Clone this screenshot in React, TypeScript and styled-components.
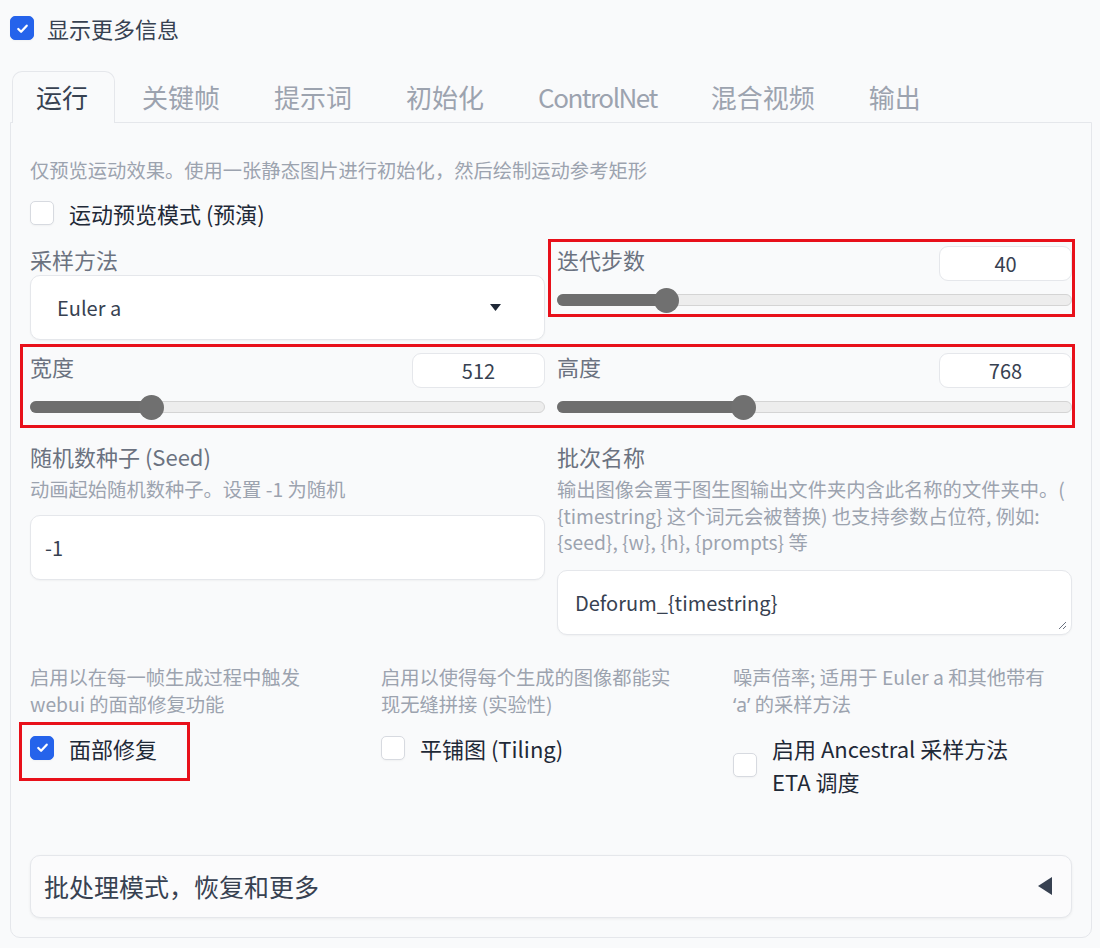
import styled, { createGlobalStyle } from 'styled-components'

const GlobalStyle = createGlobalStyle`
  body {
    margin: 0;
    background: #f9fafb;
    font-family: "Noto Sans CJK SC", "Noto Sans", sans-serif;
    color: #374151;
  }
  * { box-sizing: border-box; }
`

const Page = styled.div`
  width: 1100px;
  height: 948px;
  padding: 12px 8px 0 10px;
`

const TopRow = styled.label`
  display: flex;
  align-items: center;
  gap: 13px;
  height: 32px;
  font-size: 22px;
  color: #374151;
`

const Box = styled.span<{ $checked?: boolean }>`
  width: 24px;
  height: 24px;
  flex: none;
  border-radius: 5px;
  display: flex;
  align-items: center;
  justify-content: center;
  background: ${(p) => (p.$checked ? '#2563eb' : '#ffffff')};
  border: 1px solid ${(p) => (p.$checked ? '#2563eb' : '#d7dae0')};
  box-shadow: 0 1px 2px rgba(0, 0, 0, 0.04);
`

const TabBar = styled.div`
  display: flex;
  align-items: flex-end;
  margin-top: 26px;
  padding-left: 2px;
  height: 52px;
`

const Tab = styled.div<{ $active?: boolean; $tight?: boolean }>`
  height: 52px;
  line-height: 50px;
  padding: 0 26px 0 ${(p) => (p.$active ? '23px' : '26px')};
  font-size: 26px;
  letter-spacing: ${(p) => (p.$tight ? '-1.5px' : '0')};
  color: ${(p) => (p.$active ? '#374151' : '#9ca3af')};
  background: ${(p) => (p.$active ? '#f9fafb' : 'transparent')};
  border: 1px solid ${(p) => (p.$active ? '#e5e7eb' : 'transparent')};
  border-bottom: none;
  border-radius: 10px 10px 0 0;
  margin-bottom: -1px;
  position: relative;
  z-index: 1;
`

const Panel = styled.div`
  width: 1082px;
  border: 1px solid #e5e7eb;
  border-radius: 0 0 10px 10px;
  padding: 34px 19px 19px;
  background: #f9fafb;
`

const Desc = styled.div<{ $lh?: number }>`
  font-size: 19.3px;
  line-height: ${(p) => p.$lh ?? 26}px;
  color: #9ca3af;
`

const Latin = styled.span`
  font-family: "Noto Sans", sans-serif;
`

const CheckRow = styled.label<{ $lh?: number }>`
  display: inline-flex;
  align-items: center;
  gap: 15px;
  font-size: 22px;
  line-height: ${(p) => p.$lh ?? 30}px;
  color: #1f2937;
`

const Grid2 = styled.div<{ $mt: number }>`
  display: grid;
  grid-template-columns: 515px 515px;
  column-gap: 12px;
  align-items: start;
  margin-top: ${(p) => p.$mt}px;
`

const Grid3 = styled.div`
  display: grid;
  grid-template-columns: 339px 340px 339px;
  column-gap: 12px;
  margin-top: 29px;
`

const Field = styled.div`
  display: flex;
  flex-direction: column;
`

const Label = styled.div`
  font-size: 22px;
  line-height: 30px;
  color: #6b7280;
`

const Select = styled.div`
  margin-top: 1px;
  height: 65px;
  background: #ffffff;
  border: 1px solid #e5e7eb;
  border-radius: 10px;
  box-shadow: 0 1px 2px rgba(0, 0, 0, 0.04);
  display: flex;
  align-items: center;
  justify-content: space-between;
  padding: 0 43px 0 26px;
  font-size: 20px;
  color: #374151;
`

const TextInput = styled.div<{ $mt: number; $pl: number }>`
  margin-top: ${(p) => p.$mt}px;
  height: 65px;
  background: #ffffff;
  border: 1px solid #e5e7eb;
  border-radius: 10px;
  box-shadow: 0 1px 2px rgba(0, 0, 0, 0.04);
  display: flex;
  align-items: center;
  padding-left: ${(p) => p.$pl}px;
  font-size: 20px;
  color: #374151;
  position: relative;
`

const Resizer = styled.svg`
  position: absolute;
  right: 4px;
  bottom: 4px;
`

const SliderHead = styled.div`
  display: flex;
  justify-content: space-between;
  align-items: flex-start;
`

const NumberBox = styled.div`
  margin-top: 2px;
  width: 133px;
  height: 35px;
  background: #ffffff;
  border: 1px solid #e5e7eb;
  border-radius: 9px;
  font-size: 20px;
  line-height: 33px;
  text-align: center;
  color: #374151;
`

const SliderWrap = styled.div`
  margin-top: 7px;
  height: 24px;
  display: flex;
  align-items: center;
`

const Track = styled.div`
  position: relative;
  width: 100%;
  height: 12px;
  border-radius: 6px;
  background: #ededed;
  border: 1px solid #d4d4d4;
`

const Fill = styled.div<{ $pct: number }>`
  position: absolute;
  left: -1px;
  top: -1px;
  bottom: -1px;
  width: ${(p) => p.$pct}%;
  background: #6e6e6e;
  border-radius: 6px 0 0 6px;
`

const Thumb = styled.div<{ $pct: number }>`
  position: absolute;
  top: 50%;
  left: ${(p) => p.$pct}%;
  width: 25px;
  height: 25px;
  margin: -12.5px 0 0 -12.5px;
  border-radius: 50%;
  background: #707070;
`

const Highlight = styled.div<{ $t: number; $r: number; $b: number; $l: number; $inline?: boolean }>`
  position: relative;
  display: ${(p) => (p.$inline ? 'inline-block' : 'block')};
  &::after {
    content: '';
    position: absolute;
    top: ${(p) => -p.$t}px;
    right: ${(p) => -p.$r}px;
    bottom: ${(p) => -p.$b}px;
    left: ${(p) => -p.$l}px;
    border: 3px solid #e8101a;
    pointer-events: none;
  }
`

const OptCol = styled.div`
  display: flex;
  flex-direction: column;
`

const OptCheck = styled.div`
  margin-top: 14px;
`

const Accordion = styled.div`
  margin-top: 57px;
  height: 63px;
  background: #fbfbfc;
  border: 1px solid #e5e7eb;
  border-radius: 10px;
  box-shadow: 0 1px 3px rgba(0, 0, 0, 0.06);
  display: flex;
  align-items: center;
  justify-content: space-between;
  padding: 0 19px 0 13px;
  font-size: 25px;
  color: #374151;
`

const Check = () => (
  <svg width="15" height="15" viewBox="0 0 16 16">
    <path d="M3.5 8.5l3 3 6-6.5" fill="none" stroke="#fff" strokeWidth="2.4" strokeLinecap="round" strokeLinejoin="round" />
  </svg>
)

const Checkbox = ({ checked }: { checked?: boolean }) => (
  <Box $checked={checked}>{checked && <Check />}</Box>
)

const Slider = ({ label, value, pct }: { label: string; value: string; pct: number }) => (
  <Field>
    <SliderHead>
      <Label>{label}</Label>
      <NumberBox>{value}</NumberBox>
    </SliderHead>
    <SliderWrap>
      <Track>
        <Fill $pct={pct} />
        <Thumb $pct={pct} />
      </Track>
    </SliderWrap>
  </Field>
)

const tabs = ['运行', '关键帧', '提示词', '初始化', 'ControlNet', '混合视频', '输出']

export default function App() {
  return (
    <>
      <GlobalStyle />
      <Page>
        <TopRow>
          <Checkbox checked />
          显示更多信息
        </TopRow>
        <TabBar>
          {tabs.map((t, i) => (
            <Tab key={t} $active={i === 0} $tight={t === 'ControlNet'}>{t}</Tab>
          ))}
        </TabBar>
        <Panel>
          <Desc>仅预览运动效果。使用一张静态图片进行初始化，然后绘制运动参考矩形</Desc>
          <div style={{ marginTop: 15 }}>
            <CheckRow>
              <Checkbox />
              运动预览模式 (预演)
            </CheckRow>
          </div>

          <Grid2 $mt={14}>
            <Field>
              <Label>采样方法</Label>
              <Select>
                Euler a
                <svg width="11" height="7" viewBox="0 0 11 7">
                  <path d="M0 0h11L5.5 7z" fill="#1f2937" />
                </svg>
              </Select>
            </Field>
            <Highlight $t={5} $r={3} $b={5} $l={9}>
              <Slider label="迭代步数" value="40" pct={21.2} />
            </Highlight>
          </Grid2>

          <div style={{ marginTop: 11 }}>
            <Highlight $t={7} $r={3} $b={9} $l={10}>
              <Grid2 $mt={0}>
                <Slider label="宽度" value="512" pct={23.5} />
                <Slider label="高度" value="768" pct={36.1} />
              </Grid2>
            </Highlight>
          </div>

          <Grid2 $mt={22}>
            <Field>
              <Label>随机数种子 (Seed)</Label>
              <Desc style={{ marginTop: 5 }}>动画起始随机数种子。设置 -1 为随机</Desc>
              <TextInput $mt={13} $pl={14}>-1</TextInput>
            </Field>
            <Field>
              <Label>批次名称</Label>
              <Desc $lh={26.5} style={{ marginTop: 5 }}>
                输出图像会置于图生图输出文件夹内含此名称的文件夹中。(
                <br />
                {'{timestring}'} 这个词元会被替换) 也支持参数占位符, 例如:
                <br />
                {'{seed}, {w}, {h}, {prompts}'} 等
              </Desc>
              <TextInput $mt={14} $pl={17}>
                Deforum_{'{timestring}'}
                <Resizer width="10" height="10" viewBox="0 0 10 10">
                  <path d="M9 2L2 9M9 6L6 9" stroke="#6b7280" strokeWidth="1" />
                </Resizer>
              </TextInput>
            </Field>
          </Grid2>

          <Grid3>
            <OptCol>
              <Desc $lh={27}>
                启用以在每一帧生成过程中触发
                <br />
                webui 的面部修复功能
              </Desc>
              <OptCheck>
                <Highlight $inline $t={10} $r={33} $b={17} $l={11}>
                  <CheckRow $lh={32}>
                    <Checkbox checked />
                    面部修复
                  </CheckRow>
                </Highlight>
              </OptCheck>
            </OptCol>
            <OptCol>
              <Desc $lh={27}>
                启用以使得每个生成的图像都能实
                <br />
                现无缝拼接 (实验性)
              </Desc>
              <OptCheck>
                <CheckRow $lh={32}>
                  <Checkbox />
                  平铺图 (Tiling)
                </CheckRow>
              </OptCheck>
            </OptCol>
            <OptCol>
              <Desc $lh={27}>
                噪声倍率; 适用于 Euler a 和其他带有
                <br />
                <Latin>‘a’</Latin> 的采样方法
              </Desc>
              <OptCheck>
                <CheckRow $lh={33}>
                  <Checkbox />
                  <span>
                    启用 Ancestral 采样方法
                    <br />
                    ETA 调度
                  </span>
                </CheckRow>
              </OptCheck>
            </OptCol>
          </Grid3>

          <Accordion>
            批处理模式，恢复和更多
            <svg width="14" height="18" viewBox="0 0 14 18">
              <path d="M14 0v18L0 9z" fill="#374151" />
            </svg>
          </Accordion>
        </Panel>
      </Page>
    </>
  )
}
